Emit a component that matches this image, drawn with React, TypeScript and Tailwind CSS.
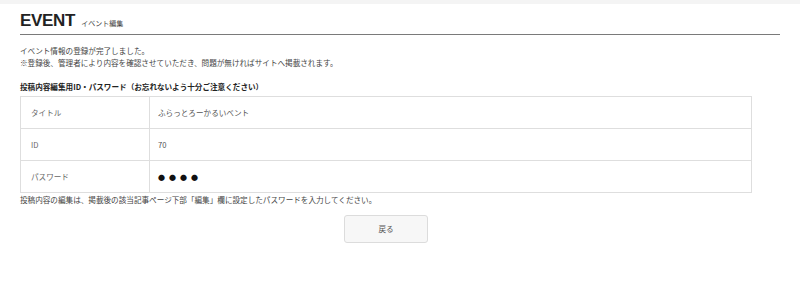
const jp = "font-['Noto_Sans_CJK_JP',sans-serif]";

const rows = [
  { label: "タイトル", value: "ふらっとろーかるいベント" },
  { label: "ID", value: "70" },
  { label: "パスワード", value: "●●●●", secret: true },
];

export default function App() {
  return (
    <div className={`min-h-[288px] bg-white text-[#333] ${jp}`}>
      <div className="h-[4px] bg-[#f4f4f4]" />
      <div className="px-[20px]">
        {/* 見出し */}
        <div className="flex items-end gap-[6px] border-b border-[#7a7a7a] pt-[7px] pb-[3px]">
          <h1 className="font-['Liberation_Sans',sans-serif] text-[17px] font-bold leading-[20px] tracking-[-0.3px] text-[#222]">
            EVENT
          </h1>
          <span className="pb-[3px] text-[7px] leading-[10px] text-[#444]">イベント編集</span>
        </div>

        <div className="pt-[10px] text-[7.6px] leading-[12px] text-[#444]">
          <p>イベント情報の登録が完了しました。</p>
          <p>※登録後、管理者により内容を確認させていただき、問題が無ければサイトへ掲載されます。</p>
        </div>

        <p className="pt-[12px] text-[7.6px] font-bold leading-[12px] text-[#222]">
          投稿内容編集用ID・パスワード（お忘れないよう十分ご注意ください）
        </p>

        <table className="mt-[3px] w-[732px] border-collapse text-[7.6px] text-[#555]">
          <tbody>
            {rows.map((r) => (
              <tr key={r.label} className="h-[32px]">
                <td className="w-[129px] border border-[#dedede] pl-[10px] text-[#666]">{r.label}</td>
                <td className="border border-[#dedede] pl-[8px] text-[#555]">
                  {r.secret ? (
                    <span className="text-[7px] tracking-[4px] text-[#111]">{r.value}</span>
                  ) : (
                    r.value
                  )}
                </td>
              </tr>
            ))}
          </tbody>
        </table>

        <p className="pt-[1px] text-[7.6px] leading-[12px] text-[#444]">
          投稿内容の編集は、掲載後の該当記事ページ下部「編集」欄に設定したパスワードを入力してください。
        </p>

        <div className="flex justify-center pt-[9px] pr-[28px]">
          <button className="h-[28px] w-[84px] rounded-[3px] border border-[#dcdcdc] bg-[#f7f7f7] text-[7.6px] text-[#555]">
            戻る
          </button>
        </div>
      </div>
    </div>
  );
}
